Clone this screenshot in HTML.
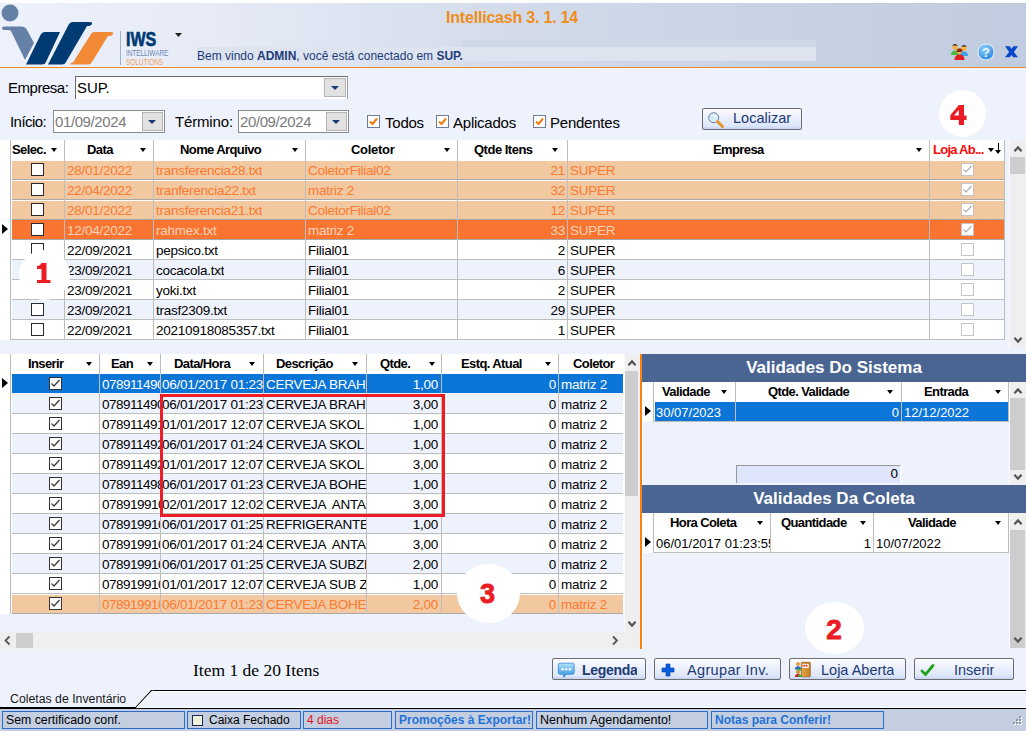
<!DOCTYPE html><html><head><meta charset="utf-8"><style>
*{margin:0;padding:0;box-sizing:border-box}
html,body{width:1026px;height:731px;overflow:hidden;background:#eef2fd;font-family:"Liberation Sans",sans-serif;color:#000}
.a{position:absolute}
.t{position:absolute;white-space:pre;overflow:hidden}
.hd{position:absolute;white-space:pre;font-weight:bold;font-size:13px;letter-spacing:-0.6px;line-height:20px}
.arr{position:absolute;width:0;height:0;border-left:3.5px solid transparent;border-right:3.5px solid transparent;border-top:4px solid #000}
.cb{position:absolute;width:13px;height:13px;border:1px solid #2a2a2a;background:#fff}
.circ{position:absolute;background:#fff;border-radius:50%;color:#e81c24;font-weight:bold;font-size:28px;text-align:center}
.btn{position:absolute;height:22px;border:1px solid #6d6d6d;border-radius:2px;background:linear-gradient(#fdfdff,#eaeffc 45%,#dde6fa 85%,#c4d4f8);color:#1c3a72;font-size:14px;line-height:20px}
.sp{position:absolute;top:711px;height:18px;border:1px solid #2b6cc8;font-size:12px;line-height:16px;padding-left:3px;white-space:pre;overflow:hidden}
</style></head><body>

<div class="a" style="left:0;top:0;width:1026px;height:3px;background:#fff"></div>
<div class="a" style="left:0;top:3px;width:1026px;height:64px;background:linear-gradient(90deg,#edf1fb 0%,#e6ebf6 20%,#d3dbea 50%,#c6d1e2 78%,#c1cce0 100%)"></div>
<div class="a" style="left:0;top:67px;width:1026px;height:1px;background:#ee8a22"></div>
<div class="a" style="left:462px;top:40px;width:354px;height:7px;background:#cfd8e6"></div>
<div class="a" style="left:197px;top:47px;width:619px;height:14px;background:#dde4f0"></div>
<div class="t" style="left:446px;top:8px;font-size:16px;font-weight:bold;letter-spacing:-0.2px;color:#ef8c1a;line-height:20px">Intellicash 3. 1. 14</div>
<div class="t" style="left:197px;top:47.5px;font-size:12px;color:#1e3c78;line-height:16px">Bem vindo <b>ADMIN</b>, você está conectado em <b>SUP.</b></div>
<svg class="a" style="left:0;top:0" width="200" height="67" viewBox="0 0 200 67">
<circle cx="10" cy="13" r="8.5" fill="#6681a8"/>
<path d="M2 28 Q2 26.5 4 26.5 L22 26.5 Q25 26.5 26.5 29 L34 43 L25 60 L11 31 Q10 30 8 30 L4 30 Q2 30 2 28 Z" fill="#6681a8"/>
<path d="M41 34 Q42.5 32 45 32 L60 32 L46 62 Q45 64.5 42 64.5 L26 64.5 Z" fill="#003a73"/>
<path d="M69 24 Q70.5 22 73 22 L90 22 Q92.5 22 92 24 Q91.5 25.5 89 26 L87 26 L66 62 Q65 64.5 62 64.5 L48 64.5 Z" fill="#003a73"/>
<path d="M91 34 Q92 32 94.5 32 L111 32 Q113.5 32 113 34 Q112.5 35.5 110 36 L108 36 L92 62 Q91 64.5 88 64.5 L70 64.5 L71.5 62.5 L73 62.5 Z" fill="#f28a35"/>
<rect x="120" y="31" width="1" height="34" fill="#9fb0c8"/>
<text x="126" y="46" font-family="Liberation Sans" font-weight="bold" font-size="20.5" fill="#003a73" stroke="#003a73" stroke-width="0.7" transform="translate(126 0) scale(0.78 1) translate(-126 0)">IWS</text>
<text x="126" y="56" font-family="Liberation Sans" font-size="9.6" fill="#6a88b0" transform="translate(126 0) scale(0.665 1) translate(-126 0)">INTELLIWARE</text>
<text x="126" y="65" font-family="Liberation Sans" font-size="9.6" fill="#f0a060" transform="translate(126 0) scale(0.67 1) translate(-126 0)">SOLUTIONS</text>
<path d="M175 33 L182 33 L178.5 37 Z" fill="#222"/>
</svg>
<svg class="a" style="left:948px;top:42px" width="76" height="20" viewBox="0 0 76 20">
<circle cx="7" cy="5" r="2.6" fill="#f6b13a"/><path d="M4 3.5 Q7 0.5 10 3.5 Z" fill="#222"/>
<path d="M3 13 Q3 8.5 7 8.5 Q11 8.5 11 13 Z" fill="#4cb842"/>
<circle cx="16" cy="6" r="2.6" fill="#f6b13a"/><path d="M13 4.5 Q16 1.5 19 4.5 Z" fill="#222"/>
<path d="M12 14 Q12 9.5 16 9.5 Q20 9.5 20 14 Z" fill="#3aa0e8"/>
<circle cx="11.5" cy="9" r="2.8" fill="#f6b13a"/><path d="M8.5 8 Q11.5 4.5 14.5 8 L14 10 L9 10 Z" fill="#8a2a10"/>
<path d="M6.5 18 Q6.5 12.5 11.5 12.5 Q16.5 12.5 16.5 18 Z" fill="#e02020"/>
<defs><radialGradient id="hg" cx="0.4" cy="0.3" r="0.8"><stop offset="0" stop-color="#8ed0ff"/><stop offset="1" stop-color="#1f7fd8"/></radialGradient></defs><circle cx="38" cy="10" r="8" fill="url(#hg)" stroke="#e8f4ff" stroke-width="1"/>
<text x="38" y="15" font-family="Liberation Sans" font-weight="bold" font-size="13" fill="#e8f4ff" text-anchor="middle">?</text>
<path d="M57 4.3 L61.8 4.3 L63.5 6.9 L65.2 4.3 L70 4.3 L65.9 10 L70 15.2 L65.2 15.2 L63.5 12.9 L61.8 15.2 L57 15.2 L61.1 10 Z" fill="#0848cc"/>
</svg>
<div class="t" style="left:8px;top:79px;font-size:15px;letter-spacing:-0.47px;line-height:18px">Empresa:</div>
<div class="a" style="left:75px;top:76px;width:273px;height:23px;background:#fff;border-top:1px solid #6a6a6a;border-left:1px solid #6a6a6a;border-right:1px solid #9a9a9a"></div>
<div class="t" style="left:77px;top:79px;font-size:15px;letter-spacing:-0.1px;line-height:18px">SUP.</div>
<div class="a" style="left:324px;top:78px;width:22px;height:19px;background:#e2e2e2;border:1px solid #b4b4b4"></div>
<div class="a" style="left:331px;top:86px;width:0;height:0;border-left:4px solid transparent;border-right:4px solid transparent;border-top:4px solid #1a3a78"></div>
<div class="t" style="left:10px;top:113px;font-size:15px;letter-spacing:-0.55px;line-height:18px">Início:</div>
<div class="t" style="left:175px;top:113px;font-size:15px;letter-spacing:-0.16px;line-height:18px">Término:</div>
<div class="a" style="left:53px;top:110px;width:112px;height:23px;background:#fff;border:1px solid #8a8a8a"></div>
<div class="t" style="left:55px;top:113px;font-size:15px;letter-spacing:-0.4px;line-height:18px;color:#7a7a7a">01/09/2024</div>
<div class="a" style="left:142px;top:112px;width:21px;height:19px;background:#e2e2e2;border:1px solid #b4b4b4"></div>
<div class="a" style="left:148px;top:120px;width:0;height:0;border-left:4px solid transparent;border-right:4px solid transparent;border-top:4px solid #1a3a78"></div>
<div class="a" style="left:238px;top:110px;width:111px;height:23px;background:#fff;border:1px solid #8a8a8a"></div>
<div class="t" style="left:240px;top:113px;font-size:15px;letter-spacing:-0.4px;line-height:18px;color:#7a7a7a">20/09/2024</div>
<div class="a" style="left:326px;top:112px;width:21px;height:19px;background:#e2e2e2;border:1px solid #b4b4b4"></div>
<div class="a" style="left:332px;top:120px;width:0;height:0;border-left:4px solid transparent;border-right:4px solid transparent;border-top:4px solid #1a3a78"></div>
<div class="a" style="left:367px;top:115px;width:13px;height:13px;background:#fff;border:1px solid #6e7d95"></div>
<svg class="a" style="left:367px;top:115px" width="13" height="13"><path d="M3 6.5 L5.5 9 L10 3.5" stroke="#f07a10" stroke-width="2" fill="none"/></svg>
<div class="t" style="left:385px;top:113.6px;font-size:15px;letter-spacing:-0.23px;line-height:18px">Todos</div>
<div class="a" style="left:436px;top:115px;width:13px;height:13px;background:#fff;border:1px solid #6e7d95"></div>
<svg class="a" style="left:436px;top:115px" width="13" height="13"><path d="M3 6.5 L5.5 9 L10 3.5" stroke="#f07a10" stroke-width="2" fill="none"/></svg>
<div class="t" style="left:453px;top:113.6px;font-size:15px;letter-spacing:-0.23px;line-height:18px">Aplicados</div>
<div class="a" style="left:533px;top:115px;width:13px;height:13px;background:#fff;border:1px solid #6e7d95"></div>
<svg class="a" style="left:533px;top:115px" width="13" height="13"><path d="M3 6.5 L5.5 9 L10 3.5" stroke="#f07a10" stroke-width="2" fill="none"/></svg>
<div class="t" style="left:550px;top:113.6px;font-size:15px;letter-spacing:-0.23px;line-height:18px">Pendentes</div>
<div class="btn" style="left:702px;top:108px;width:100px;height:22px"></div>
<svg class="a" style="left:707px;top:111px" width="18" height="18"><circle cx="6.7" cy="6.7" r="5" fill="#d4ecfa" stroke="#6878a8" stroke-width="1"/><circle cx="8" cy="5" r="1.5" fill="#fff" opacity="0.8"/><path d="M10.5 10.5 L15.5 15.5" stroke="#e0962a" stroke-width="3" stroke-linecap="round"/></svg>
<div class="t" style="left:733px;top:109px;font-size:14.5px;line-height:18px;color:#1c3a72">Localizar</div>
<div class="a" style="left:0;top:140px;width:10px;height:200px;background:#fff"></div>
<div class="a" style="left:10px;top:140px;width:995px;height:200px;background:#fff;border-left:1px solid #bdbdbd;border-right:1px solid #bdbdbd;border-bottom:1px solid #bdbdbd"></div>
<div class="a" style="left:12px;top:160px;width:992px;height:19px;background:#f2c8a0;border-top:1px solid #fff;"></div>
<div class="a" style="left:12px;top:179px;width:992px;height:1px;background:#a9a9a9"></div>
<div class="cb" style="left:31px;top:163px"></div>
<div class="t" style="left:67px;top:162px;font-size:13.5px;letter-spacing:-0.25px;line-height:17px;color:#fa7a30">28/01/2022</div>
<div class="t" style="left:156px;top:162px;font-size:13.5px;letter-spacing:-0.25px;line-height:17px;color:#fa7a30">transferencia28.txt</div>
<div class="t" style="left:308px;top:162px;font-size:13.5px;letter-spacing:-0.25px;line-height:17px;color:#fa7a30">ColetorFilial02</div>
<div class="t" style="left:458px;top:162px;width:107px;text-align:right;font-size:13.5px;letter-spacing:-0.25px;line-height:17px;color:#fa7a30">21</div>
<div class="t" style="left:570px;top:162px;width:45px;font-size:13.5px;letter-spacing:-0.25px;line-height:17px;color:#fa7a30">SUPER</div>
<div class="a" style="left:961px;top:163px;width:13px;height:13px;background:#fff;border:1px solid #c4c4c4"></div>
<svg class="a" style="left:961px;top:163px" width="13" height="13"><path d="M2.5 6.5 L5 9 L10.5 3" stroke="#b0b0b0" stroke-width="1.2" fill="none"/></svg>
<div class="a" style="left:12px;top:180px;width:992px;height:19px;background:#f2c8a0;border-top:1px solid #fff;"></div>
<div class="a" style="left:12px;top:199px;width:992px;height:1px;background:#a9a9a9"></div>
<div class="cb" style="left:31px;top:183px"></div>
<div class="t" style="left:67px;top:182px;font-size:13.5px;letter-spacing:-0.25px;line-height:17px;color:#fa7a30">22/04/2022</div>
<div class="t" style="left:156px;top:182px;font-size:13.5px;letter-spacing:-0.25px;line-height:17px;color:#fa7a30">tranferencia22.txt</div>
<div class="t" style="left:308px;top:182px;font-size:13.5px;letter-spacing:-0.25px;line-height:17px;color:#fa7a30">matriz 2</div>
<div class="t" style="left:458px;top:182px;width:107px;text-align:right;font-size:13.5px;letter-spacing:-0.25px;line-height:17px;color:#fa7a30">32</div>
<div class="t" style="left:570px;top:182px;width:45px;font-size:13.5px;letter-spacing:-0.25px;line-height:17px;color:#fa7a30">SUPER</div>
<div class="a" style="left:961px;top:183px;width:13px;height:13px;background:#fff;border:1px solid #c4c4c4"></div>
<svg class="a" style="left:961px;top:183px" width="13" height="13"><path d="M2.5 6.5 L5 9 L10.5 3" stroke="#b0b0b0" stroke-width="1.2" fill="none"/></svg>
<div class="a" style="left:12px;top:200px;width:992px;height:19px;background:#f2c8a0;border-top:1px solid #fff;"></div>
<div class="a" style="left:12px;top:219px;width:992px;height:1px;background:#a9a9a9"></div>
<div class="cb" style="left:31px;top:203px"></div>
<div class="t" style="left:67px;top:202px;font-size:13.5px;letter-spacing:-0.25px;line-height:17px;color:#fa7a30">28/01/2022</div>
<div class="t" style="left:156px;top:202px;font-size:13.5px;letter-spacing:-0.25px;line-height:17px;color:#fa7a30">transferencia21.txt</div>
<div class="t" style="left:308px;top:202px;font-size:13.5px;letter-spacing:-0.25px;line-height:17px;color:#fa7a30">ColetorFilial02</div>
<div class="t" style="left:458px;top:202px;width:107px;text-align:right;font-size:13.5px;letter-spacing:-0.25px;line-height:17px;color:#fa7a30">12</div>
<div class="t" style="left:570px;top:202px;width:45px;font-size:13.5px;letter-spacing:-0.25px;line-height:17px;color:#fa7a30">SUPER</div>
<div class="a" style="left:961px;top:203px;width:13px;height:13px;background:#fff;border:1px solid #c4c4c4"></div>
<svg class="a" style="left:961px;top:203px" width="13" height="13"><path d="M2.5 6.5 L5 9 L10.5 3" stroke="#b0b0b0" stroke-width="1.2" fill="none"/></svg>
<div class="a" style="left:12px;top:220px;width:992px;height:19px;background:#f97431;"></div>
<div class="a" style="left:12px;top:239px;width:992px;height:1px;background:#a9a9a9"></div>
<div class="cb" style="left:31px;top:223px"></div>
<div class="t" style="left:67px;top:222px;font-size:13.5px;letter-spacing:-0.25px;line-height:17px;color:#fcd2b6">12/04/2022</div>
<div class="t" style="left:156px;top:222px;font-size:13.5px;letter-spacing:-0.25px;line-height:17px;color:#fcd2b6">rahmex.txt</div>
<div class="t" style="left:308px;top:222px;font-size:13.5px;letter-spacing:-0.25px;line-height:17px;color:#fcd2b6">matriz 2</div>
<div class="t" style="left:458px;top:222px;width:107px;text-align:right;font-size:13.5px;letter-spacing:-0.25px;line-height:17px;color:#fcd2b6">33</div>
<div class="t" style="left:570px;top:222px;width:45px;font-size:13.5px;letter-spacing:-0.25px;line-height:17px;color:#fcd2b6">SUPER</div>
<div class="a" style="left:961px;top:223px;width:13px;height:13px;background:#fff;border:1px solid #c4c4c4"></div>
<svg class="a" style="left:961px;top:223px" width="13" height="13"><path d="M2.5 6.5 L5 9 L10.5 3" stroke="#b0b0b0" stroke-width="1.2" fill="none"/></svg>
<div class="a" style="left:12px;top:240px;width:992px;height:19px;background:#fff;"></div>
<div class="a" style="left:12px;top:259px;width:992px;height:1px;background:#bdbdbd"></div>
<div class="cb" style="left:31px;top:243px"></div>
<div class="t" style="left:67px;top:242px;font-size:13.5px;letter-spacing:-0.25px;line-height:17px;color:#000">22/09/2021</div>
<div class="t" style="left:156px;top:242px;font-size:13.5px;letter-spacing:-0.25px;line-height:17px;color:#000">pepsico.txt</div>
<div class="t" style="left:308px;top:242px;font-size:13.5px;letter-spacing:-0.25px;line-height:17px;color:#000">Filial01</div>
<div class="t" style="left:458px;top:242px;width:107px;text-align:right;font-size:13.5px;letter-spacing:-0.25px;line-height:17px;color:#000">2</div>
<div class="t" style="left:570px;top:242px;width:45px;font-size:13.5px;letter-spacing:-0.25px;line-height:17px;color:#000">SUPER</div>
<div class="a" style="left:961px;top:243px;width:13px;height:13px;background:#fff;border:1px solid #c4c4c4"></div>
<div class="a" style="left:12px;top:260px;width:992px;height:19px;background:#eef2fd;"></div>
<div class="a" style="left:12px;top:279px;width:992px;height:1px;background:#bdbdbd"></div>
<div class="cb" style="left:31px;top:263px"></div>
<div class="t" style="left:67px;top:262px;font-size:13.5px;letter-spacing:-0.25px;line-height:17px;color:#000">23/09/2021</div>
<div class="t" style="left:156px;top:262px;font-size:13.5px;letter-spacing:-0.25px;line-height:17px;color:#000">cocacola.txt</div>
<div class="t" style="left:308px;top:262px;font-size:13.5px;letter-spacing:-0.25px;line-height:17px;color:#000">Filial01</div>
<div class="t" style="left:458px;top:262px;width:107px;text-align:right;font-size:13.5px;letter-spacing:-0.25px;line-height:17px;color:#000">6</div>
<div class="t" style="left:570px;top:262px;width:45px;font-size:13.5px;letter-spacing:-0.25px;line-height:17px;color:#000">SUPER</div>
<div class="a" style="left:961px;top:263px;width:13px;height:13px;background:#fff;border:1px solid #c4c4c4"></div>
<div class="a" style="left:12px;top:280px;width:992px;height:19px;background:#fff;"></div>
<div class="a" style="left:12px;top:299px;width:992px;height:1px;background:#bdbdbd"></div>
<div class="cb" style="left:31px;top:283px"></div>
<div class="t" style="left:67px;top:282px;font-size:13.5px;letter-spacing:-0.25px;line-height:17px;color:#000">23/09/2021</div>
<div class="t" style="left:156px;top:282px;font-size:13.5px;letter-spacing:-0.25px;line-height:17px;color:#000">yoki.txt</div>
<div class="t" style="left:308px;top:282px;font-size:13.5px;letter-spacing:-0.25px;line-height:17px;color:#000">Filial01</div>
<div class="t" style="left:458px;top:282px;width:107px;text-align:right;font-size:13.5px;letter-spacing:-0.25px;line-height:17px;color:#000">2</div>
<div class="t" style="left:570px;top:282px;width:45px;font-size:13.5px;letter-spacing:-0.25px;line-height:17px;color:#000">SUPER</div>
<div class="a" style="left:961px;top:283px;width:13px;height:13px;background:#fff;border:1px solid #c4c4c4"></div>
<div class="a" style="left:12px;top:300px;width:992px;height:19px;background:#eef2fd;"></div>
<div class="a" style="left:12px;top:319px;width:992px;height:1px;background:#bdbdbd"></div>
<div class="cb" style="left:31px;top:303px"></div>
<div class="t" style="left:67px;top:302px;font-size:13.5px;letter-spacing:-0.25px;line-height:17px;color:#000">23/09/2021</div>
<div class="t" style="left:156px;top:302px;font-size:13.5px;letter-spacing:-0.25px;line-height:17px;color:#000">trasf2309.txt</div>
<div class="t" style="left:308px;top:302px;font-size:13.5px;letter-spacing:-0.25px;line-height:17px;color:#000">Filial01</div>
<div class="t" style="left:458px;top:302px;width:107px;text-align:right;font-size:13.5px;letter-spacing:-0.25px;line-height:17px;color:#000">29</div>
<div class="t" style="left:570px;top:302px;width:45px;font-size:13.5px;letter-spacing:-0.25px;line-height:17px;color:#000">SUPER</div>
<div class="a" style="left:961px;top:303px;width:13px;height:13px;background:#fff;border:1px solid #c4c4c4"></div>
<div class="a" style="left:12px;top:320px;width:992px;height:19px;background:#fff;"></div>
<div class="a" style="left:12px;top:339px;width:992px;height:1px;background:#bdbdbd"></div>
<div class="cb" style="left:31px;top:323px"></div>
<div class="t" style="left:67px;top:322px;font-size:13.5px;letter-spacing:-0.25px;line-height:17px;color:#000">22/09/2021</div>
<div class="t" style="left:156px;top:322px;font-size:13.5px;letter-spacing:-0.25px;line-height:17px;color:#000">20210918085357.txt</div>
<div class="t" style="left:308px;top:322px;font-size:13.5px;letter-spacing:-0.25px;line-height:17px;color:#000">Filial01</div>
<div class="t" style="left:458px;top:322px;width:107px;text-align:right;font-size:13.5px;letter-spacing:-0.25px;line-height:17px;color:#000">1</div>
<div class="t" style="left:570px;top:322px;width:45px;font-size:13.5px;letter-spacing:-0.25px;line-height:17px;color:#000">SUPER</div>
<div class="a" style="left:961px;top:323px;width:13px;height:13px;background:#fff;border:1px solid #c4c4c4"></div>
<div class="a" style="left:64px;top:140px;width:1px;height:200px;background:#bdbdbd"></div>
<div class="a" style="left:153px;top:140px;width:1px;height:200px;background:#bdbdbd"></div>
<div class="a" style="left:305px;top:140px;width:1px;height:200px;background:#bdbdbd"></div>
<div class="a" style="left:457px;top:140px;width:1px;height:200px;background:#bdbdbd"></div>
<div class="a" style="left:567px;top:140px;width:1px;height:200px;background:#bdbdbd"></div>
<div class="a" style="left:929px;top:140px;width:1px;height:200px;background:#bdbdbd"></div>
<div class="hd" style="left:12px;top:140px">Selec.</div>
<div class="arr" style="left:51px;top:148px"></div>
<div class="arr" style="left:140px;top:148px"></div>
<div class="arr" style="left:292px;top:148px"></div>
<div class="arr" style="left:444px;top:148px"></div>
<div class="arr" style="left:552px;top:148px"></div>
<div class="arr" style="left:916px;top:148px"></div>
<div class="hd" style="left:87px;top:140px">Data</div>
<div class="hd" style="left:180px;top:140px">Nome Arquivo</div>
<div class="hd" style="left:351px;top:140px;letter-spacing:-0.3px">Coletor</div>
<div class="hd" style="left:474px;top:140px;letter-spacing:-0.5px">Qtde Itens</div>
<div class="hd" style="left:713px;top:140px">Empresa</div>
<div class="hd" style="left:933px;top:140px;color:#ff0808;letter-spacing:-0.75px">Loja Ab...</div>
<div class="arr" style="left:988px;top:148px"></div>
<div class="a" style="left:998px;top:143px;width:1.3px;height:9px;background:#000"></div>
<div class="a" style="left:995px;top:150px;width:0;height:0;border-left:3.6px solid transparent;border-right:3.6px solid transparent;border-top:4.5px solid #000"></div>
<div class="a" style="left:2px;top:224px;width:0;height:0;border-top:5.5px solid transparent;border-bottom:5.5px solid transparent;border-left:6px solid #000"></div>
<div class="a" style="left:1009px;top:140px;width:17px;height:208px;background:#efefef;border-left:1px solid #fafafa"></div>
<div class="a" style="left:1010px;top:157px;width:15px;height:17px;background:#cdcdcd"></div>
<svg class="a" style="left:1009px;top:140px" width="17" height="17"><path d="M5.4 11.2 L9.0 7.4 L12.6 11.2" stroke="#555" stroke-width="2.2" fill="none"/></svg>
<svg class="a" style="left:1009px;top:331px" width="17" height="17"><path d="M5.4 6.8 L9.0 10.6 L12.6 6.8" stroke="#555" stroke-width="2.2" fill="none"/></svg>
<div class="circ" style="left:19px;top:250px;width:51px;height:50px"></div>
<svg class="a" style="left:0;top:0" width="100" height="300"><path d="M41.5 263 L46.5 263 L46.5 280 L50.5 280 L50.5 283 L37 283 L37 280 L41.5 280 L41.5 269 L37 269 L37 266 Q40 266 41.5 263 Z" fill="#ea1c24"/></svg>
<div class="a" style="left:0;top:354px;width:10px;height:260px;background:#fff"></div>
<div class="a" style="left:10px;top:354px;width:614px;height:260px;background:#fff;border-left:1px solid #bdbdbd"></div>
<div class="a" style="left:12px;top:374px;width:611px;height:19px;background:#0b75d8;"></div>
<div class="a" style="left:12px;top:393px;width:611px;height:1px;background:#eef2fd"></div>
<div class="cb" style="left:49px;top:377px;border-color:#333"></div>
<svg class="a" style="left:49px;top:377px" width="13" height="13"><path d="M2.5 6.5 L5 9 L10.5 3" stroke="#3a3a3a" stroke-width="1.3" fill="none"/></svg>
<div class="t" style="left:102px;top:376px;width:58px;font-size:13.5px;letter-spacing:-0.25px;line-height:17px;color:#fff;letter-spacing:-0.5px">078911490</div>
<div class="t" style="left:162px;top:376px;width:101px;font-size:13.5px;letter-spacing:-0.25px;line-height:17px;color:#fff">06/01/2017 01:23</div>
<div class="t" style="left:266px;top:376px;width:100px;font-size:13.5px;letter-spacing:-0.25px;line-height:17px;color:#fff">CERVEJA BRAH</div>
<div class="t" style="left:367px;top:376px;width:71px;text-align:right;font-size:13.5px;letter-spacing:-0.25px;line-height:17px;color:#fff">1,00</div>
<div class="t" style="left:442px;top:376px;width:114px;text-align:right;font-size:13.5px;letter-spacing:-0.25px;line-height:17px;color:#fff">0</div>
<div class="t" style="left:561px;top:376px;width:62px;font-size:13.5px;letter-spacing:-0.25px;line-height:17px;color:#fff">matriz 2</div>
<div class="a" style="left:12px;top:394px;width:611px;height:19px;background:#eef2fd;"></div>
<div class="a" style="left:12px;top:413px;width:611px;height:1px;background:#bdbdbd"></div>
<div class="cb" style="left:49px;top:397px;border-color:#333"></div>
<svg class="a" style="left:49px;top:397px" width="13" height="13"><path d="M2.5 6.5 L5 9 L10.5 3" stroke="#3a3a3a" stroke-width="1.3" fill="none"/></svg>
<div class="t" style="left:102px;top:396px;width:58px;font-size:13.5px;letter-spacing:-0.25px;line-height:17px;color:#000;letter-spacing:-0.5px">078911490</div>
<div class="t" style="left:162px;top:396px;width:101px;font-size:13.5px;letter-spacing:-0.25px;line-height:17px;color:#000">06/01/2017 01:23</div>
<div class="t" style="left:266px;top:396px;width:100px;font-size:13.5px;letter-spacing:-0.25px;line-height:17px;color:#000">CERVEJA BRAH</div>
<div class="t" style="left:367px;top:396px;width:71px;text-align:right;font-size:13.5px;letter-spacing:-0.25px;line-height:17px;color:#000">3,00</div>
<div class="t" style="left:442px;top:396px;width:114px;text-align:right;font-size:13.5px;letter-spacing:-0.25px;line-height:17px;color:#000">0</div>
<div class="t" style="left:561px;top:396px;width:62px;font-size:13.5px;letter-spacing:-0.25px;line-height:17px;color:#000">matriz 2</div>
<div class="a" style="left:12px;top:414px;width:611px;height:19px;background:#fff;"></div>
<div class="a" style="left:12px;top:433px;width:611px;height:1px;background:#bdbdbd"></div>
<div class="cb" style="left:49px;top:417px;border-color:#333"></div>
<svg class="a" style="left:49px;top:417px" width="13" height="13"><path d="M2.5 6.5 L5 9 L10.5 3" stroke="#3a3a3a" stroke-width="1.3" fill="none"/></svg>
<div class="t" style="left:102px;top:416px;width:58px;font-size:13.5px;letter-spacing:-0.25px;line-height:17px;color:#000;letter-spacing:-0.5px">078911491</div>
<div class="t" style="left:162px;top:416px;width:101px;font-size:13.5px;letter-spacing:-0.25px;line-height:17px;color:#000">01/01/2017 12:07</div>
<div class="t" style="left:266px;top:416px;width:100px;font-size:13.5px;letter-spacing:-0.25px;line-height:17px;color:#000">CERVEJA SKOL</div>
<div class="t" style="left:367px;top:416px;width:71px;text-align:right;font-size:13.5px;letter-spacing:-0.25px;line-height:17px;color:#000">1,00</div>
<div class="t" style="left:442px;top:416px;width:114px;text-align:right;font-size:13.5px;letter-spacing:-0.25px;line-height:17px;color:#000">0</div>
<div class="t" style="left:561px;top:416px;width:62px;font-size:13.5px;letter-spacing:-0.25px;line-height:17px;color:#000">matriz 2</div>
<div class="a" style="left:12px;top:434px;width:611px;height:19px;background:#eef2fd;"></div>
<div class="a" style="left:12px;top:453px;width:611px;height:1px;background:#bdbdbd"></div>
<div class="cb" style="left:49px;top:437px;border-color:#333"></div>
<svg class="a" style="left:49px;top:437px" width="13" height="13"><path d="M2.5 6.5 L5 9 L10.5 3" stroke="#3a3a3a" stroke-width="1.3" fill="none"/></svg>
<div class="t" style="left:102px;top:436px;width:58px;font-size:13.5px;letter-spacing:-0.25px;line-height:17px;color:#000;letter-spacing:-0.5px">078911492</div>
<div class="t" style="left:162px;top:436px;width:101px;font-size:13.5px;letter-spacing:-0.25px;line-height:17px;color:#000">06/01/2017 01:24</div>
<div class="t" style="left:266px;top:436px;width:100px;font-size:13.5px;letter-spacing:-0.25px;line-height:17px;color:#000">CERVEJA SKOL</div>
<div class="t" style="left:367px;top:436px;width:71px;text-align:right;font-size:13.5px;letter-spacing:-0.25px;line-height:17px;color:#000">1,00</div>
<div class="t" style="left:442px;top:436px;width:114px;text-align:right;font-size:13.5px;letter-spacing:-0.25px;line-height:17px;color:#000">0</div>
<div class="t" style="left:561px;top:436px;width:62px;font-size:13.5px;letter-spacing:-0.25px;line-height:17px;color:#000">matriz 2</div>
<div class="a" style="left:12px;top:454px;width:611px;height:19px;background:#fff;"></div>
<div class="a" style="left:12px;top:473px;width:611px;height:1px;background:#bdbdbd"></div>
<div class="cb" style="left:49px;top:457px;border-color:#333"></div>
<svg class="a" style="left:49px;top:457px" width="13" height="13"><path d="M2.5 6.5 L5 9 L10.5 3" stroke="#3a3a3a" stroke-width="1.3" fill="none"/></svg>
<div class="t" style="left:102px;top:456px;width:58px;font-size:13.5px;letter-spacing:-0.25px;line-height:17px;color:#000;letter-spacing:-0.5px">078911492</div>
<div class="t" style="left:162px;top:456px;width:101px;font-size:13.5px;letter-spacing:-0.25px;line-height:17px;color:#000">01/01/2017 12:07</div>
<div class="t" style="left:266px;top:456px;width:100px;font-size:13.5px;letter-spacing:-0.25px;line-height:17px;color:#000">CERVEJA SKOL</div>
<div class="t" style="left:367px;top:456px;width:71px;text-align:right;font-size:13.5px;letter-spacing:-0.25px;line-height:17px;color:#000">3,00</div>
<div class="t" style="left:442px;top:456px;width:114px;text-align:right;font-size:13.5px;letter-spacing:-0.25px;line-height:17px;color:#000">0</div>
<div class="t" style="left:561px;top:456px;width:62px;font-size:13.5px;letter-spacing:-0.25px;line-height:17px;color:#000">matriz 2</div>
<div class="a" style="left:12px;top:474px;width:611px;height:19px;background:#eef2fd;"></div>
<div class="a" style="left:12px;top:493px;width:611px;height:1px;background:#bdbdbd"></div>
<div class="cb" style="left:49px;top:477px;border-color:#333"></div>
<svg class="a" style="left:49px;top:477px" width="13" height="13"><path d="M2.5 6.5 L5 9 L10.5 3" stroke="#3a3a3a" stroke-width="1.3" fill="none"/></svg>
<div class="t" style="left:102px;top:476px;width:58px;font-size:13.5px;letter-spacing:-0.25px;line-height:17px;color:#000;letter-spacing:-0.5px">078911498</div>
<div class="t" style="left:162px;top:476px;width:101px;font-size:13.5px;letter-spacing:-0.25px;line-height:17px;color:#000">06/01/2017 01:23</div>
<div class="t" style="left:266px;top:476px;width:100px;font-size:13.5px;letter-spacing:-0.25px;line-height:17px;color:#000">CERVEJA BOHE</div>
<div class="t" style="left:367px;top:476px;width:71px;text-align:right;font-size:13.5px;letter-spacing:-0.25px;line-height:17px;color:#000">1,00</div>
<div class="t" style="left:442px;top:476px;width:114px;text-align:right;font-size:13.5px;letter-spacing:-0.25px;line-height:17px;color:#000">0</div>
<div class="t" style="left:561px;top:476px;width:62px;font-size:13.5px;letter-spacing:-0.25px;line-height:17px;color:#000">matriz 2</div>
<div class="a" style="left:12px;top:494px;width:611px;height:19px;background:#fff;"></div>
<div class="a" style="left:12px;top:513px;width:611px;height:1px;background:#bdbdbd"></div>
<div class="cb" style="left:49px;top:497px;border-color:#333"></div>
<svg class="a" style="left:49px;top:497px" width="13" height="13"><path d="M2.5 6.5 L5 9 L10.5 3" stroke="#3a3a3a" stroke-width="1.3" fill="none"/></svg>
<div class="t" style="left:102px;top:496px;width:58px;font-size:13.5px;letter-spacing:-0.25px;line-height:17px;color:#000;letter-spacing:-0.5px">078919910</div>
<div class="t" style="left:162px;top:496px;width:101px;font-size:13.5px;letter-spacing:-0.25px;line-height:17px;color:#000">02/01/2017 12:02</div>
<div class="t" style="left:266px;top:496px;width:100px;font-size:13.5px;letter-spacing:-0.25px;line-height:17px;color:#000">CERVEJA  ANTA</div>
<div class="t" style="left:367px;top:496px;width:71px;text-align:right;font-size:13.5px;letter-spacing:-0.25px;line-height:17px;color:#000">3,00</div>
<div class="t" style="left:442px;top:496px;width:114px;text-align:right;font-size:13.5px;letter-spacing:-0.25px;line-height:17px;color:#000">0</div>
<div class="t" style="left:561px;top:496px;width:62px;font-size:13.5px;letter-spacing:-0.25px;line-height:17px;color:#000">matriz 2</div>
<div class="a" style="left:12px;top:514px;width:611px;height:19px;background:#eef2fd;"></div>
<div class="a" style="left:12px;top:533px;width:611px;height:1px;background:#bdbdbd"></div>
<div class="cb" style="left:49px;top:517px;border-color:#333"></div>
<svg class="a" style="left:49px;top:517px" width="13" height="13"><path d="M2.5 6.5 L5 9 L10.5 3" stroke="#3a3a3a" stroke-width="1.3" fill="none"/></svg>
<div class="t" style="left:102px;top:516px;width:58px;font-size:13.5px;letter-spacing:-0.25px;line-height:17px;color:#000;letter-spacing:-0.5px">078919910</div>
<div class="t" style="left:162px;top:516px;width:101px;font-size:13.5px;letter-spacing:-0.25px;line-height:17px;color:#000">06/01/2017 01:25</div>
<div class="t" style="left:266px;top:516px;width:100px;font-size:13.5px;letter-spacing:-0.25px;line-height:17px;color:#000">REFRIGERANTE</div>
<div class="t" style="left:367px;top:516px;width:71px;text-align:right;font-size:13.5px;letter-spacing:-0.25px;line-height:17px;color:#000">1,00</div>
<div class="t" style="left:442px;top:516px;width:114px;text-align:right;font-size:13.5px;letter-spacing:-0.25px;line-height:17px;color:#000">0</div>
<div class="t" style="left:561px;top:516px;width:62px;font-size:13.5px;letter-spacing:-0.25px;line-height:17px;color:#000">matriz 2</div>
<div class="a" style="left:12px;top:534px;width:611px;height:19px;background:#fff;"></div>
<div class="a" style="left:12px;top:553px;width:611px;height:1px;background:#bdbdbd"></div>
<div class="cb" style="left:49px;top:537px;border-color:#333"></div>
<svg class="a" style="left:49px;top:537px" width="13" height="13"><path d="M2.5 6.5 L5 9 L10.5 3" stroke="#3a3a3a" stroke-width="1.3" fill="none"/></svg>
<div class="t" style="left:102px;top:536px;width:58px;font-size:13.5px;letter-spacing:-0.25px;line-height:17px;color:#000;letter-spacing:-0.5px">078919910</div>
<div class="t" style="left:162px;top:536px;width:101px;font-size:13.5px;letter-spacing:-0.25px;line-height:17px;color:#000">06/01/2017 01:24</div>
<div class="t" style="left:266px;top:536px;width:100px;font-size:13.5px;letter-spacing:-0.25px;line-height:17px;color:#000">CERVEJA  ANTA</div>
<div class="t" style="left:367px;top:536px;width:71px;text-align:right;font-size:13.5px;letter-spacing:-0.25px;line-height:17px;color:#000">3,00</div>
<div class="t" style="left:442px;top:536px;width:114px;text-align:right;font-size:13.5px;letter-spacing:-0.25px;line-height:17px;color:#000">0</div>
<div class="t" style="left:561px;top:536px;width:62px;font-size:13.5px;letter-spacing:-0.25px;line-height:17px;color:#000">matriz 2</div>
<div class="a" style="left:12px;top:554px;width:611px;height:19px;background:#eef2fd;"></div>
<div class="a" style="left:12px;top:573px;width:611px;height:1px;background:#bdbdbd"></div>
<div class="cb" style="left:49px;top:557px;border-color:#333"></div>
<svg class="a" style="left:49px;top:557px" width="13" height="13"><path d="M2.5 6.5 L5 9 L10.5 3" stroke="#3a3a3a" stroke-width="1.3" fill="none"/></svg>
<div class="t" style="left:102px;top:556px;width:58px;font-size:13.5px;letter-spacing:-0.25px;line-height:17px;color:#000;letter-spacing:-0.5px">078919910</div>
<div class="t" style="left:162px;top:556px;width:101px;font-size:13.5px;letter-spacing:-0.25px;line-height:17px;color:#000">06/01/2017 01:25</div>
<div class="t" style="left:266px;top:556px;width:100px;font-size:13.5px;letter-spacing:-0.25px;line-height:17px;color:#000">CERVEJA SUBZE</div>
<div class="t" style="left:367px;top:556px;width:71px;text-align:right;font-size:13.5px;letter-spacing:-0.25px;line-height:17px;color:#000">2,00</div>
<div class="t" style="left:442px;top:556px;width:114px;text-align:right;font-size:13.5px;letter-spacing:-0.25px;line-height:17px;color:#000">0</div>
<div class="t" style="left:561px;top:556px;width:62px;font-size:13.5px;letter-spacing:-0.25px;line-height:17px;color:#000">matriz 2</div>
<div class="a" style="left:12px;top:574px;width:611px;height:19px;background:#fff;"></div>
<div class="a" style="left:12px;top:593px;width:611px;height:1px;background:#bdbdbd"></div>
<div class="cb" style="left:49px;top:577px;border-color:#333"></div>
<svg class="a" style="left:49px;top:577px" width="13" height="13"><path d="M2.5 6.5 L5 9 L10.5 3" stroke="#3a3a3a" stroke-width="1.3" fill="none"/></svg>
<div class="t" style="left:102px;top:576px;width:58px;font-size:13.5px;letter-spacing:-0.25px;line-height:17px;color:#000;letter-spacing:-0.5px">078919910</div>
<div class="t" style="left:162px;top:576px;width:101px;font-size:13.5px;letter-spacing:-0.25px;line-height:17px;color:#000">01/01/2017 12:07</div>
<div class="t" style="left:266px;top:576px;width:100px;font-size:13.5px;letter-spacing:-0.25px;line-height:17px;color:#000">CERVEJA SUB Z</div>
<div class="t" style="left:367px;top:576px;width:71px;text-align:right;font-size:13.5px;letter-spacing:-0.25px;line-height:17px;color:#000">1,00</div>
<div class="t" style="left:442px;top:576px;width:114px;text-align:right;font-size:13.5px;letter-spacing:-0.25px;line-height:17px;color:#000">0</div>
<div class="t" style="left:561px;top:576px;width:62px;font-size:13.5px;letter-spacing:-0.25px;line-height:17px;color:#000">matriz 2</div>
<div class="a" style="left:12px;top:594px;width:611px;height:19px;background:#f2c8a0;border-top:1px solid #fff;"></div>
<div class="a" style="left:12px;top:613px;width:611px;height:1px;background:#a9a9a9"></div>
<div class="cb" style="left:49px;top:597px;border-color:#333"></div>
<svg class="a" style="left:49px;top:597px" width="13" height="13"><path d="M2.5 6.5 L5 9 L10.5 3" stroke="#3a3a3a" stroke-width="1.3" fill="none"/></svg>
<div class="t" style="left:102px;top:596px;width:58px;font-size:13.5px;letter-spacing:-0.25px;line-height:17px;color:#fa7a30;letter-spacing:-0.5px">078919910</div>
<div class="t" style="left:162px;top:596px;width:101px;font-size:13.5px;letter-spacing:-0.25px;line-height:17px;color:#fa7a30">06/01/2017 01:23</div>
<div class="t" style="left:266px;top:596px;width:100px;font-size:13.5px;letter-spacing:-0.25px;line-height:17px;color:#fa7a30">CERVEJA BOHE</div>
<div class="t" style="left:367px;top:596px;width:71px;text-align:right;font-size:13.5px;letter-spacing:-0.25px;line-height:17px;color:#fa7a30">2,00</div>
<div class="t" style="left:442px;top:596px;width:114px;text-align:right;font-size:13.5px;letter-spacing:-0.25px;line-height:17px;color:#fa7a30">0</div>
<div class="t" style="left:561px;top:596px;width:62px;font-size:13.5px;letter-spacing:-0.25px;line-height:17px;color:#fa7a30">matriz 2</div>
<div class="a" style="left:99px;top:354px;width:1px;height:260px;background:#bdbdbd"></div>
<div class="a" style="left:160px;top:354px;width:1px;height:260px;background:#bdbdbd"></div>
<div class="a" style="left:263px;top:354px;width:1px;height:260px;background:#bdbdbd"></div>
<div class="a" style="left:366px;top:354px;width:1px;height:260px;background:#bdbdbd"></div>
<div class="a" style="left:441px;top:354px;width:1px;height:260px;background:#bdbdbd"></div>
<div class="a" style="left:558px;top:354px;width:1px;height:260px;background:#bdbdbd"></div>
<div class="hd" style="left:28px;top:354px">Inserir</div>
<div class="arr" style="left:86px;top:362px"></div>
<div class="hd" style="left:111px;top:354px">Ean</div>
<div class="arr" style="left:147px;top:362px"></div>
<div class="hd" style="left:174px;top:354px">Data/Hora</div>
<div class="arr" style="left:249px;top:362px"></div>
<div class="hd" style="left:276px;top:354px">Descrição</div>
<div class="arr" style="left:352px;top:362px"></div>
<div class="hd" style="left:380px;top:354px">Qtde.</div>
<div class="arr" style="left:429px;top:362px"></div>
<div class="hd" style="left:461px;top:354px">Estq. Atual</div>
<div class="arr" style="left:545px;top:362px"></div>
<div class="hd" style="left:573px;top:354px;width:50px;overflow:hidden">Coletor</div>
<div class="a" style="left:2px;top:378px;width:0;height:0;border-top:5.5px solid transparent;border-bottom:5.5px solid transparent;border-left:6px solid #000"></div>
<div class="a" style="left:160px;top:394px;width:285px;height:123px;border:3px solid #ee1c24"></div>
<div class="a" style="left:624px;top:354px;width:15px;height:278px;background:#efefef;border-left:1px solid #fafafa"></div>
<div class="a" style="left:625px;top:371px;width:13px;height:125px;background:#cdcdcd"></div>
<svg class="a" style="left:624px;top:354px" width="15" height="17"><path d="M4.4 11.2 L8.0 7.4 L11.6 11.2" stroke="#555" stroke-width="2.2" fill="none"/></svg>
<svg class="a" style="left:624px;top:615px" width="15" height="17"><path d="M4.4 6.8 L8.0 10.6 L11.6 6.8" stroke="#555" stroke-width="2.2" fill="none"/></svg>
<div class="a" style="left:0;top:632px;width:640px;height:17px;background:#efefef"></div>
<div class="a" style="left:16px;top:633px;width:17px;height:15px;background:#cdcdcd"></div>
<svg class="a" style="left:0;top:633px" width="16" height="15"><path d="M9.5 3.5 L5.5 7.5 L9.5 11.5" stroke="#555" stroke-width="1.8" fill="none"/></svg>
<svg class="a" style="left:607px;top:633px" width="16" height="15"><path d="M6 3.5 L10 7.5 L6 11.5" stroke="#555" stroke-width="1.8" fill="none"/></svg>
<div class="circ" style="left:457px;top:564px;width:63px;height:59px"></div>
<svg class="a" style="left:450px;top:570px" width="80" height="50"><text x="37.4" y="32.8" text-anchor="middle" font-family="Liberation Sans" font-weight="bold" font-size="27" fill="#ea1c24" stroke="#ea1c24" stroke-width="0.9">3</text></svg>
<div class="a" style="left:640px;top:354px;width:2px;height:295px;background:#f7820c"></div>
<div class="a" style="left:642px;top:354px;width:384px;height:28px;background:#4a6592"></div>
<div class="t" style="left:642px;top:354px;width:384px;text-align:center;font-size:17px;font-weight:bold;color:#fff;line-height:28px">Validades Do Sistema</div>
<div class="a" style="left:642px;top:382px;width:367px;height:40px;background:#fff"></div>
<div class="a" style="left:642px;top:422px;width:1px;height:63px;background:#fff"></div>
<div class="a" style="left:642px;top:513px;width:367px;height:40px;background:#fff"></div>
<div class="a" style="left:642px;top:553px;width:1px;height:95px;background:#fff"></div>
<div class="a" style="left:653px;top:382px;width:356px;height:40px;background:#fff;border-left:1px solid #bdbdbd;border-right:1px solid #bdbdbd;border-bottom:1px solid #bdbdbd"></div>
<div class="a" style="left:655px;top:402px;width:353px;height:19px;background:#0b75d8"></div>
<div class="a" style="left:735px;top:382px;width:1px;height:40px;background:#bdbdbd"></div>
<div class="a" style="left:901px;top:382px;width:1px;height:40px;background:#bdbdbd"></div>
<div class="hd" style="left:662px;top:382px">Validade</div>
<div class="arr" style="left:721px;top:390px"></div>
<div class="hd" style="left:768px;top:382px">Qtde. Validade</div>
<div class="arr" style="left:887px;top:390px"></div>
<div class="hd" style="left:924px;top:382px">Entrada</div>
<div class="arr" style="left:995px;top:390px"></div>
<div class="t" style="left:656px;top:404px;font-size:13px;line-height:17px;color:#fff">30/07/2023</div>
<div class="t" style="left:737px;top:404px;width:162px;text-align:right;font-size:13px;line-height:17px;color:#fff">0</div>
<div class="t" style="left:904px;top:404px;font-size:13px;line-height:17px;color:#fff">12/12/2022</div>
<div class="a" style="left:645px;top:406px;width:0;height:0;border-top:5.5px solid transparent;border-bottom:5.5px solid transparent;border-left:6px solid #000"></div>
<div class="a" style="left:736px;top:465px;width:165px;height:18px;background:#dfe6fb;border-top:1px solid #9a9a9a;border-left:1px solid #9a9a9a;border-right:1px solid #fff"></div>
<div class="t" style="left:737px;top:465px;width:161px;text-align:right;font-size:13.5px;line-height:17px">0</div>
<div class="a" style="left:1009px;top:382px;width:17px;height:103px;background:#efefef;border-left:1px solid #fafafa"></div>
<div class="a" style="left:1010px;top:398px;width:15px;height:72px;background:#cdcdcd"></div>
<svg class="a" style="left:1009px;top:382px" width="17" height="17"><path d="M5.4 11.2 L9.0 7.4 L12.6 11.2" stroke="#555" stroke-width="2.2" fill="none"/></svg>
<svg class="a" style="left:1009px;top:468px" width="17" height="17"><path d="M5.4 6.8 L9.0 10.6 L12.6 6.8" stroke="#555" stroke-width="2.2" fill="none"/></svg>
<div class="a" style="left:642px;top:485px;width:384px;height:28px;background:#4a6592"></div>
<div class="t" style="left:642px;top:485px;width:384px;text-align:center;font-size:17px;font-weight:bold;color:#fff;line-height:28px">Validades Da Coleta</div>
<div class="a" style="left:653px;top:513px;width:356px;height:40px;background:#fff;border-left:1px solid #bdbdbd;border-right:1px solid #bdbdbd;border-bottom:1px solid #bdbdbd"></div>
<div class="a" style="left:770px;top:513px;width:1px;height:40px;background:#bdbdbd"></div>
<div class="a" style="left:873px;top:513px;width:1px;height:40px;background:#bdbdbd"></div>
<div class="hd" style="left:670px;top:513px">Hora Coleta</div>
<div class="arr" style="left:757px;top:521px"></div>
<div class="hd" style="left:781px;top:513px">Quantidade</div>
<div class="arr" style="left:860px;top:521px"></div>
<div class="hd" style="left:908px;top:513px">Validade</div>
<div class="arr" style="left:995px;top:521px"></div>
<div class="t" style="left:656px;top:535px;width:114px;font-size:13px;line-height:17px;color:#000">06/01/2017 01:23:55</div>
<div class="t" style="left:772px;top:535px;width:99px;text-align:right;font-size:13px;line-height:17px;color:#000">1</div>
<div class="t" style="left:876px;top:535px;font-size:13px;line-height:17px;color:#000">10/07/2022</div>
<div class="a" style="left:645px;top:537px;width:0;height:0;border-top:5.5px solid transparent;border-bottom:5.5px solid transparent;border-left:6px solid #000"></div>
<div class="a" style="left:1009px;top:513px;width:17px;height:135px;background:#efefef;border-left:1px solid #fafafa"></div>
<div class="a" style="left:1010px;top:530px;width:15px;height:118px;background:#cdcdcd"></div>
<svg class="a" style="left:1009px;top:513px" width="17" height="17"><path d="M5.4 11.2 L9.0 7.4 L12.6 11.2" stroke="#555" stroke-width="2.2" fill="none"/></svg>
<svg class="a" style="left:1009px;top:631px" width="17" height="17"><path d="M5.4 6.8 L9.0 10.6 L12.6 6.8" stroke="#555" stroke-width="2.2" fill="none"/></svg>
<div class="circ" style="left:805px;top:602px;width:59px;height:52px"></div>
<svg class="a" style="left:800px;top:600px" width="80" height="50"><text x="34" y="38.6" text-anchor="middle" font-family="Liberation Sans" font-weight="bold" font-size="28" fill="#ea1c24" stroke="#ea1c24" stroke-width="0.9">2</text></svg>
<div class="t" style="left:193px;top:660px;font-family:'Liberation Serif',serif;font-size:17.5px;line-height:20px">Item 1 de 20 Itens</div>
<div class="btn" style="left:552px;top:658px;width:94px"></div>
<svg class="a" style="left:556px;top:661px" width="20" height="18"><defs><linearGradient id="lg1" x1="0" y1="0" x2="0" y2="1"><stop offset="0" stop-color="#b4e2fa"/><stop offset="1" stop-color="#2e8ede"/></linearGradient></defs><path d="M2.3 4 Q2.3 2.2 4 2.2 L16.5 2.2 Q18.2 2.2 18.2 4 L18.2 11.5 Q18.2 13.3 16.5 13.3 L10.5 13.3 L7.5 16.3 L7.5 13.3 L4 13.3 Q2.3 13.3 2.3 11.5 Z" fill="url(#lg1)" stroke="#2a80d0" stroke-width="0.7"/><ellipse cx="6.5" cy="8.3" rx="1.5" ry="1.1" fill="#fff"/><ellipse cx="10.2" cy="8.3" rx="1.5" ry="1.1" fill="#fff"/><ellipse cx="13.9" cy="8.3" rx="1.5" ry="1.1" fill="#fff"/></svg>
<div class="t" style="left:582px;top:661px;font-size:14px;font-weight:bold;letter-spacing:-0.3px;color:#1c3a72;line-height:18px">Legenda</div>
<div class="btn" style="left:654px;top:658px;width:127px"></div>
<svg class="a" style="left:661px;top:663px" width="14" height="14"><path d="M5 1 L9 1 L9 5 L13 5 L13 9 L9 9 L9 13 L5 13 L5 9 L1 9 L1 5 L5 5 Z" fill="#0a60dc" stroke="#0038a8" stroke-width="0.6"/></svg>
<div class="t" style="left:687px;top:661px;font-size:14.5px;letter-spacing:0.35px;color:#1c3a72;line-height:18px">Agrupar Inv.</div>
<div class="btn" style="left:789px;top:658px;width:117px"></div>
<svg class="a" style="left:794px;top:660px" width="18" height="19"><defs><linearGradient id="dg" x1="0" y1="0" x2="1" y2="0"><stop offset="0" stop-color="#e8a848"/><stop offset="1" stop-color="#c88020"/></linearGradient></defs><rect x="7.3" y="2.3" width="9" height="14.5" rx="0.8" fill="url(#dg)" stroke="#8a5510" stroke-width="0.7"/><rect x="8.8" y="4" width="6" height="4" fill="#f4f8ff"/><rect x="9.5" y="4.8" width="1.6" height="1.8" fill="#e02020"/><rect x="11.8" y="4.8" width="1.6" height="1.8" fill="#e02020"/><circle cx="4" cy="4" r="2" fill="#e0a040"/><path d="M1 9.5 Q1 6.2 4 6.2 Q7 6.2 7 9.5 Z" fill="#2a60d8"/><rect x="3" y="8.5" width="4" height="2" fill="#30b030"/><circle cx="4" cy="12" r="2" fill="#d09030"/><path d="M1 17 Q1 14 4 14 Q7 14 7 17 Z" fill="#d01818"/><rect x="4" y="15" width="3.5" height="2" fill="#30b030"/></svg>
<div class="t" style="left:821px;top:661px;font-size:14.5px;letter-spacing:0px;color:#1c3a72;line-height:18px">Loja Aberta</div>
<div class="btn" style="left:914px;top:658px;width:100px"></div>
<svg class="a" style="left:919px;top:662px" width="18" height="18"><path d="M3 9 L6.5 12.5 L14 3.5" stroke="#22a020" stroke-width="2.8" fill="none" stroke-linecap="round"/></svg>
<div class="t" style="left:954px;top:661px;font-size:14.5px;letter-spacing:0px;color:#1c3a72;line-height:18px">Inserir</div>
<div class="a" style="left:151px;top:690px;width:875px;height:1px;background:#000"></div>
<div class="a" style="left:151px;top:691px;width:875px;height:1px;background:#fff"></div>
<div class="a" style="left:0;top:707px;width:136px;height:2px;background:#000"></div>
<div class="a" style="left:136px;top:707px;width:890px;height:1px;background:#fff"></div>
<div class="a" style="left:136px;top:708px;width:890px;height:1px;background:#000"></div>
<svg class="a" style="left:130px;top:686px" width="26" height="24"><path d="M5.2 22 L21.5 4.3" stroke="#000" stroke-width="1.1" fill="none"/><path d="M6.8 21.2 L23 4.6" stroke="#fff" stroke-width="0.8" fill="none"/></svg>
<div class="t" style="left:10px;top:692px;font-size:12.3px;line-height:15px;color:#1a1a1a">Coletas de Inventário</div>
<div class="a" style="left:0;top:709px;width:1026px;height:22px;background:#c3cee0"></div>
<div class="sp" style="left:2px;width:183px;color:#000;font-size:12.3px;">Sem certificado conf.</div>
<div class="sp" style="left:187px;width:114px;color:#000;font-size:12px;padding-left:21px;">Caixa Fechado</div>
<div class="sp" style="left:303px;width:89px;color:#e8141c;font-size:12px;">4 dias</div>
<div class="sp" style="left:395px;width:138px;color:#1f72d8;font-size:12px;font-weight:bold;">Promoções à Exportar!</div>
<div class="sp" style="left:536px;width:172px;color:#000;font-size:12.5px;">Nenhum Agendamento!</div>
<div class="sp" style="left:711px;width:173px;color:#1f72d8;font-size:12px;font-weight:bold;">Notas para Conferir!</div>
<div class="a" style="left:192px;top:715px;width:11px;height:11px;background:#f0f0dc;border:1px solid #1a2a50"></div>
<svg class="a" style="left:1008px;top:714px" width="16" height="16"><g fill="#fff"><rect x="12" y="3" width="2" height="2"/><rect x="9" y="6" width="2" height="2"/><rect x="12" y="6" width="2" height="2"/><rect x="6" y="9" width="2" height="2"/><rect x="9" y="9" width="2" height="2"/><rect x="12" y="9" width="2" height="2"/></g><g fill="#8a95a8"><rect x="11" y="2" width="2" height="2"/><rect x="8" y="5" width="2" height="2"/><rect x="11" y="5" width="2" height="2"/><rect x="5" y="8" width="2" height="2"/><rect x="8" y="8" width="2" height="2"/><rect x="11" y="8" width="2" height="2"/></g></svg>
<div class="circ" style="left:939px;top:90px;width:47px;height:47px"></div>
<svg class="a" style="left:900px;top:90px" width="100" height="50"><path d="M958.8 105 L964 105 L964 115.4 L966.5 115.4 L966.5 119.9 L964 119.9 L964 125 L958.8 125 L958.8 119.9 L950.3 119.9 L950.3 115.3 Z M958.8 109.8 L954 115.4 L958.8 115.4 Z" fill="#ea1c24" fill-rule="evenodd" transform="translate(-900 -90)"/></svg>
</body></html>
